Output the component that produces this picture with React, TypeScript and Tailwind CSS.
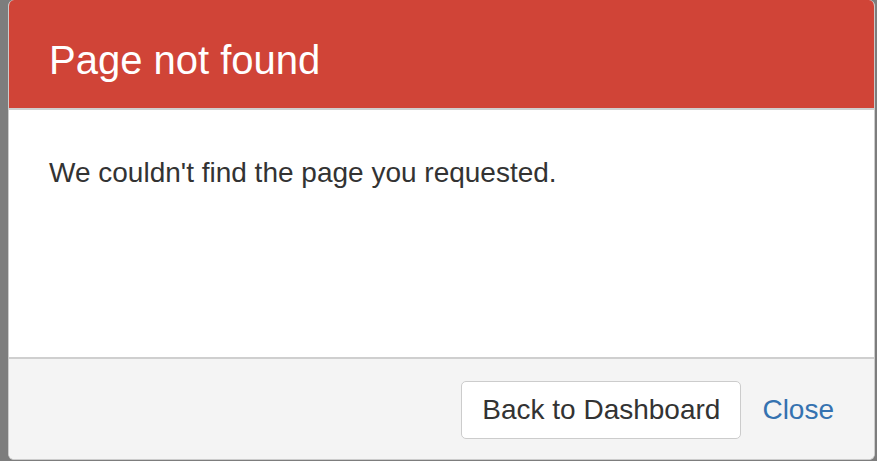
export default function App() {
  return (
    <div
      className="w-[877px] h-[461px] bg-[#7d7d7d] pl-[8px] pr-[2px] overflow-hidden"
      style={{ fontFamily: '"Liberation Sans", Arial, sans-serif' }}
    >
      <div className="w-[867px] h-[460px] flex flex-col bg-white border border-t-0 border-[#cccccc] rounded-[6px] overflow-hidden">
        {/* Header */}
        <div className="h-[110px] shrink-0 bg-[#d04437] border-b-2 border-[#cfcfcf] flex items-center pl-[40px] pt-[12px]">
          <h1 className="text-[40px] leading-[48px] text-white">Page not found</h1>
        </div>

        {/* Body */}
        <div className="flex-1 pl-[40px] pt-[43px]">
          <p className="text-[28px] leading-[40px] text-[#333333]">
            We couldn't find the page you requested.
          </p>
        </div>

        {/* Footer */}
        <div className="h-[102px] shrink-0 bg-[#f4f4f4] border-t-2 border-[#cfcfcf] flex items-center justify-end gap-[21px] pr-[40px] pt-[1px]">
          <button className="h-[58px] px-[20px] bg-white border border-[#cccccc] rounded-[5px] text-[28px] leading-[32px] text-[#333333]">
            Back to Dashboard
          </button>
          <a href="#" className="text-[28px] leading-[32px] text-[#3572b0]">
            Close
          </a>
        </div>
      </div>
    </div>
  );
}
